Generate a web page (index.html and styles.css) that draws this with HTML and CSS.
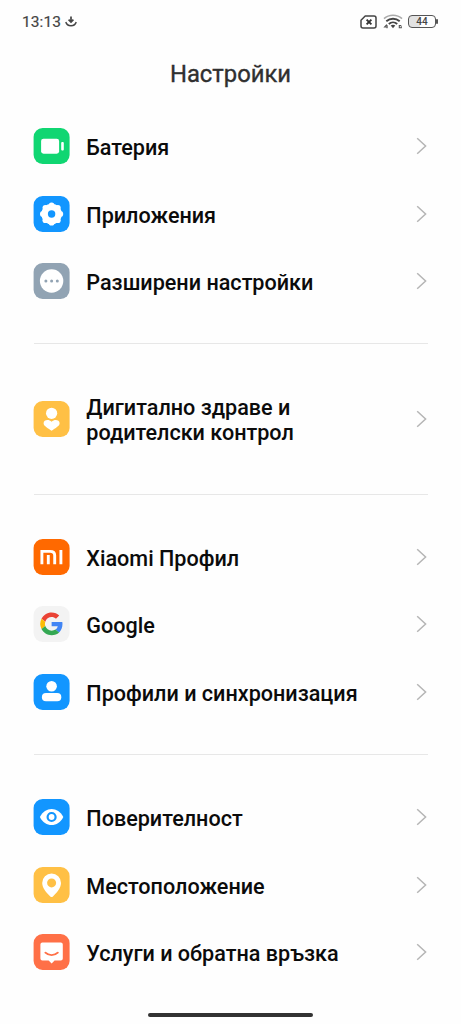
FILE: index.html
```html
<!DOCTYPE html>
<html lang="bg">
<head>
<meta charset="utf-8">
<title>Настройки</title>
<link rel="stylesheet" href="styles.css">
</head>
<body>
<svg class="defs" aria-hidden="true">
  <symbol id="chevron" viewBox="0 0 12 18"><path d="M1.2 1.2 L9.6 9 L1.2 16.8" fill="none" stroke="#b5b5b5" stroke-width="1.5"/></symbol>
</svg>
<div class="screen">
  <header class="status">
    <span class="clock">13:13</span>
    <svg class="download" width="12" height="12" viewBox="0 0 12 12"><path d="M6 0.5V6M3.6 3.6 6 6 8.4 3.6" fill="none" stroke="#444" stroke-width="1.7"/><path d="M.8 6C2 10.9 10 10.9 11.2 6" fill="none" stroke="#444" stroke-width="1.4"/></svg>
    <span class="spacer"></span>
    <svg class="sim" width="17" height="14" viewBox="0 0 17 14"><path d="M5.2 1H14a2 2 0 0 1 2 2v8a2 2 0 0 1-2 2H3a2 2 0 0 1-2-2V5.2Z" fill="none" stroke="#444" stroke-width="1.5" stroke-linejoin="round"/><path d="M6.6 4.6l4.8 4.8M11.4 4.6L6.6 9.4" stroke="#333" stroke-width="1.9"/></svg>
    <svg class="wifi" width="20" height="15" viewBox="0 0 20 15"><g fill="none"><path d="M1 4.6C6 .1 14 .1 19 4.6" stroke="#aaa" stroke-width="1.6"/><path d="M3.3 7.3C7.2 3.8 12.8 3.8 16.7 7.3" stroke="#444" stroke-width="1.9"/><path d="M5.8 10C8.2 7.8 11.8 7.8 14.2 10" stroke="#444" stroke-width="1.9"/></g><path d="M7.7 11.6Q10 9.9 12.3 11.6L10 14.2Z" fill="#444"/><path d="M3.8 10.5L1.6 13h3.2M4 11v3.3M18.3 11.5h-2v2.2h2v-1.5" fill="none" stroke="#555" stroke-width="1.1"/></svg>
    <span class="battery"><span class="level">44</span></span>
  </header>
  <h1 class="title">Настройки</h1>
  <main>
    <section class="group">
      <div class="row">
        <svg class="icon green" viewBox="0 0 36 36"><rect x="7.5" y="10.7" width="18" height="15" rx="2.4" fill="#fff"/><rect x="27.6" y="14" width="2.6" height="8.5" rx=".9" fill="#fff"/></svg>
        <span class="label">Батерия</span><svg class="chev"><use href="#chevron"/></svg>
      </div>
      <div class="row">
        <svg class="icon blue" viewBox="0 0 36 36"><g fill="#fff"><circle cx="18" cy="18" r="10.3"/><circle cx="18" cy="9.3" r="2.9"/><circle cx="24.2" cy="11.8" r="2.9"/><circle cx="26.7" cy="18" r="2.9"/><circle cx="24.2" cy="24.2" r="2.9"/><circle cx="18" cy="26.7" r="2.9"/><circle cx="11.8" cy="24.2" r="2.9"/><circle cx="9.3" cy="18" r="2.9"/><circle cx="11.8" cy="11.8" r="2.9"/></g><circle cx="18" cy="18" r="3.7" fill="#1296ff"/></svg>
        <span class="label">Приложения</span><svg class="chev"><use href="#chevron"/></svg>
      </div>
      <div class="row">
        <svg class="icon gray" viewBox="0 0 36 36"><circle cx="18" cy="18" r="11.7" fill="#fff"/><g fill="#91a3b3"><circle cx="12.3" cy="18" r="1.5"/><circle cx="18" cy="18" r="1.5"/><circle cx="23.7" cy="18" r="1.5"/></g></svg>
        <span class="label">Разширени настройки</span><svg class="chev"><use href="#chevron"/></svg>
      </div>
    </section>
    <section class="group">
      <div class="row tall">
        <svg class="icon yellow" viewBox="0 0 36 36"><circle cx="18" cy="12.3" r="5.6" fill="#fff"/><path d="M18 20.7C15.2 18.1 10 18.8 10 22.2C10 25.4 15 27.2 18 29.8C21 27.2 26 25.4 26 22.2C26 18.8 20.8 18.1 18 20.7Z" fill="#fff"/></svg>
        <span class="label">Дигитално здраве и<br>родителски контрол</span><svg class="chev"><use href="#chevron"/></svg>
      </div>
    </section>
    <section class="group">
      <div class="row">
        <svg class="icon orange" viewBox="0 0 36 36"><g fill="none" stroke="#fff" stroke-width="2.9"><path d="M8.3 25.3V12.4h8.2q4.6 0 4.6 4v8.9"/><path d="M14.7 16v9.3M27.3 11v14.3"/></g></svg>
        <span class="label">Xiaomi Профил</span><svg class="chev"><use href="#chevron"/></svg>
      </div>
      <div class="row">
        <svg class="icon light" viewBox="0 0 36 36"><g transform="translate(6.7 6.5) scale(.472)"><path fill="#ea4335" d="M24 9.5c3.5 0 6.7 1.2 9.2 3.6l6.9-6.9C35.9 2.4 30.5 0 24 0 14.6 0 6.5 5.4 2.6 13.2l8 6.2C12.4 13.7 17.7 9.5 24 9.5z"/><path fill="#4285f4" d="M47 24.6c0-1.6-.2-3.1-.4-4.6H24v9h12.9c-.6 3-2.3 5.5-4.8 7.2l7.7 6C44.4 38 47 31.8 47 24.6z"/><path fill="#fbbc05" d="M10.5 28.6a14.5 14.5 0 0 1 0-9.2l-8-6.2a24 24 0 0 0 0 21.6z"/><path fill="#34a853" d="M24 48c6.5 0 11.9-2.1 15.9-5.8l-7.7-6c-2.2 1.5-4.9 2.3-8.2 2.3-6.3 0-11.6-4.2-13.5-9.9l-8 6.2C6.5 42.6 14.6 48 24 48z"/></g></svg>
        <span class="label">Google</span><svg class="chev"><use href="#chevron"/></svg>
      </div>
      <div class="row">
        <svg class="icon blue" viewBox="0 0 36 36"><circle cx="18" cy="12.2" r="5.3" fill="#fff"/><rect x="8.3" y="19" width="19.4" height="8.3" rx="4.1" fill="#fff"/></svg>
        <span class="label">Профили и синхронизация</span><svg class="chev"><use href="#chevron"/></svg>
      </div>
    </section>
    <section class="group">
      <div class="row">
        <svg class="icon blue" viewBox="0 0 36 36"><path d="M6.3 18C11.5 7.3 24.5 7.3 29.7 18C24.5 28.7 11.5 28.7 6.3 18Z" fill="#fff"/><circle cx="18" cy="18" r="4" fill="none" stroke="#1296ff" stroke-width="2.2"/></svg>
        <span class="label">Поверителност</span><svg class="chev"><use href="#chevron"/></svg>
      </div>
      <div class="row">
        <svg class="icon yellow" viewBox="0 0 36 36"><path d="M18 6.6a9.4 9.4 0 0 0-9.4 9.4C8.6 21 12.9 26 16.7 29.5Q18 30.7 19.3 29.5C23.1 26 27.4 21 27.4 16A9.4 9.4 0 0 0 18 6.6Z" fill="#fff"/><circle cx="18" cy="15.9" r="4.5" fill="#ffc045"/></svg>
        <span class="label">Местоположение</span><svg class="chev"><use href="#chevron"/></svg>
      </div>
      <div class="row">
        <svg class="icon coral" viewBox="0 0 36 36"><path d="M8.8 8.5H27.2Q29.2 8.5 29.2 10.5V24.5Q29.2 26.5 27.2 26.5H21L18 29.5L15 26.5H8.8Q6.8 26.5 6.8 24.5V10.5Q6.8 8.5 8.8 8.5Z" fill="#fff"/><path d="M11.8 18.7C15 21.9 21 21.9 24.2 18.7" fill="none" stroke="#ff7047" stroke-width="1.9" stroke-linecap="round"/></svg>
        <span class="label">Услуги и обратна връзка</span><svg class="chev"><use href="#chevron"/></svg>
      </div>
    </section>
  </main>
  <footer class="nav"><span class="handle"></span></footer>
</div>
</body>
</html>
```

FILE: styles.css
```css
* { box-sizing: border-box; }
body { margin: 0; background: #fff; font-family: Roboto, "Noto Sans", sans-serif; }
.defs { display: none; }
.screen { width: 461px; height: 1024px; display: flex; flex-direction: column; overflow: hidden; background: #fefefe; }
.status { height: 43px; padding: 0 25px 0 22px; display: flex; align-items: center; color: #444; flex: none; }
.clock { font-size: 15.5px; letter-spacing: .1px; -webkit-text-stroke: .2px #444; }
.download { margin-left: 4px; }
.spacer { flex: 1; }
.wifi { margin: 0 5px 0 6px; }
.battery { width: 28px; height: 13px; border: 1.5px solid #555; border-radius: 4px; position: relative; display: flex; align-items: center; justify-content: center; background: linear-gradient(90deg, #e2e2e2 44%, #fefefe 44%); }
.battery::after { content: ""; position: absolute; right: -3px; top: 3px; width: 2px; height: 5px; background: #555; border-radius: 1px; }
.level { font-size: 10px; line-height: 11px; font-weight: 500; }
.title { flex: none; margin: 0; height: 69.4px; padding-top: 16px; text-align: center; font-size: 23.8px; line-height: 30px; font-weight: 400; color: #303030; -webkit-text-stroke: .35px #303030; }
.group { padding: 28.3px 0; margin: 0 33.5px; border-bottom: 1px solid #e7e7e7; }
.group:first-child { padding-top: 0; }
.group:last-child { border-bottom: 0; }
.row { height: 67.6px; display: flex; align-items: center; }
.row.tall { height: 92.6px; }
.icon { width: 36px; height: 36px; border-radius: 9px; flex: none; transform: translateX(-.4px); }
.label { flex: 1; margin-left: 16.8px; padding-top: 2.8px; font-size: 21.6px; line-height: 25px; font-weight: 500; color: #0b0b0b; white-space: nowrap; }
.chev { width: 12px; height: 18px; flex: none; }
.green { background: #10d672; }
.blue { background: #1296ff; }
.gray { background: #91a3b3; }
.yellow { background: #ffc045; }
.orange { background: #ff6900; }
.light { background: #f3f3f3; }
.coral { background: #ff7047; }
.nav { flex: none; margin-top: auto; height: 11px; display: flex; justify-content: center; align-items: flex-start; }
.handle { width: 165px; height: 4px; border-radius: 2px; background: #333; }
main { flex: none; height: 900.6px; overflow: hidden; }
```
